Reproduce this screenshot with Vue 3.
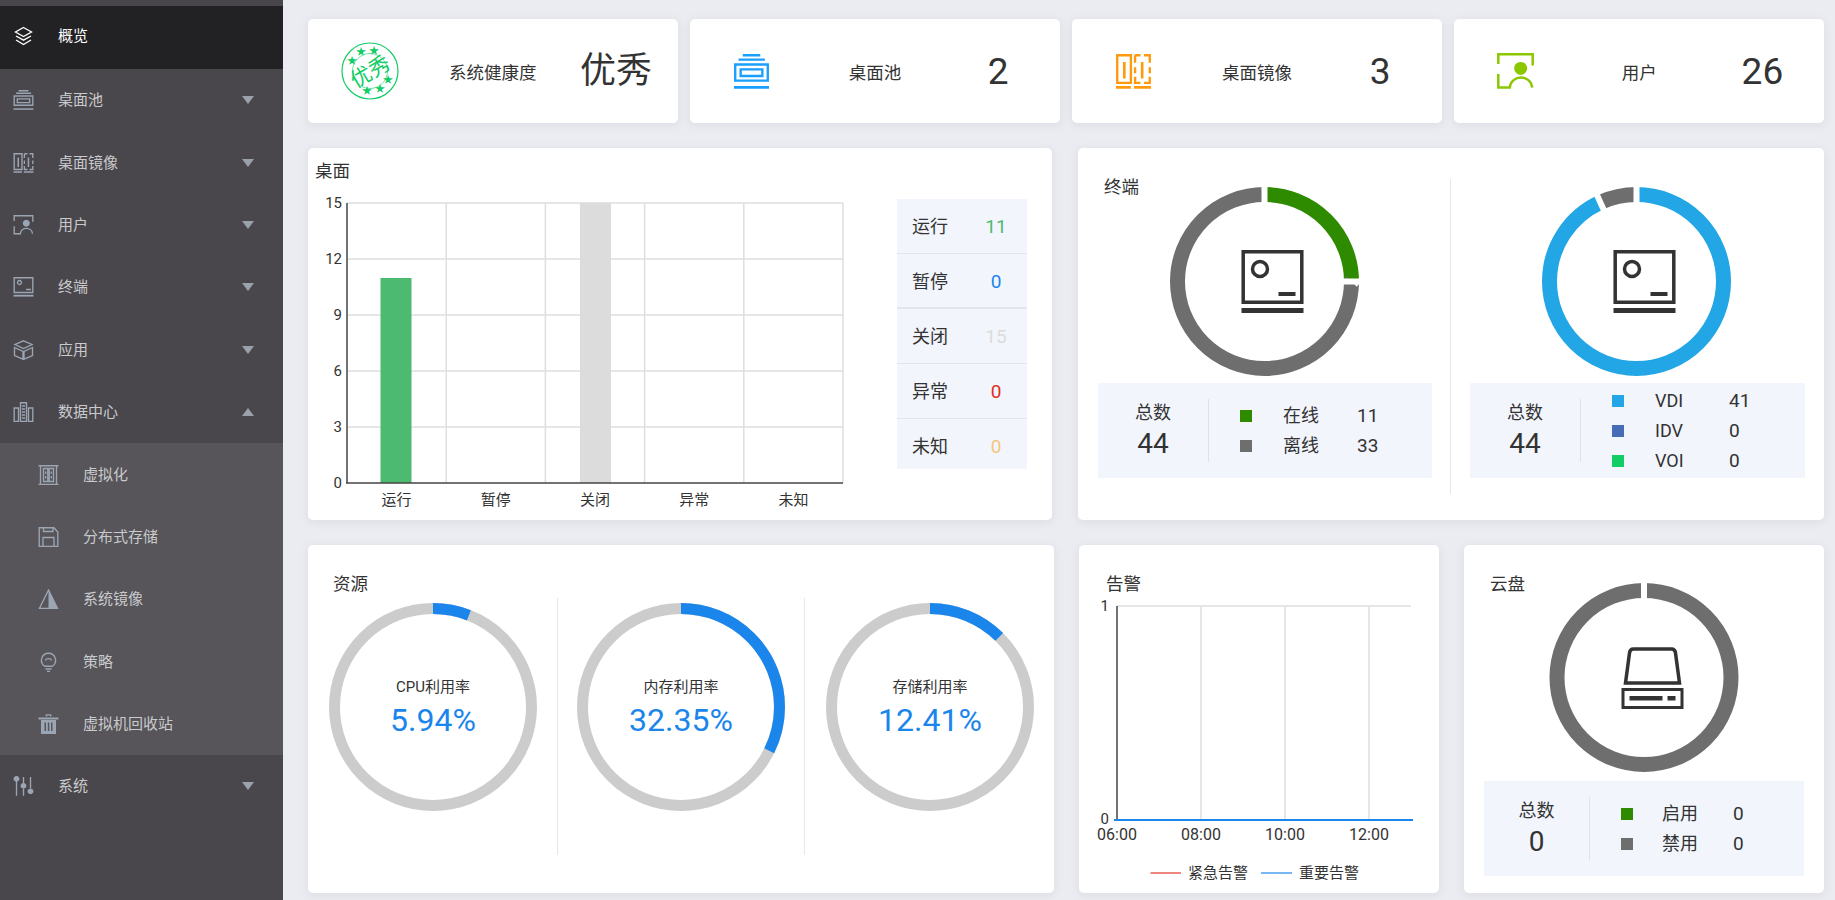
<script setup>
const icons = {
  layers: { s: 'M10 1.500 18 6 10 10.500 2 6ZM2.500 10 10 14.200 17.500 10M2.500 14 10 18.500 17.500 14' },
  pool: { s: 'M5 .7H15M2.600 3.200H17.600M.7 6H19.300V15.200H.7ZM3.800 8.800H16.200V12.600H3.800Z', f: 'M0 18.300H20V19.800H0Z' },
  image: { s: 'M.7 .7H8.500V16.500H.7ZM10.900 .7H14M16 .7H19.300V5M19.300 7.500V11M19.300 13V16.500H16M14 16.500H10.900V13M10.900 11V7.500M10.900 5V.7', f: 'M4 4.500H5.500V14H4ZM14.200 4.500H15.700V14H14.200ZM0 18.300H8.500V19.800H0ZM10.300 18.300H20V19.800H10.300Z' },
  user: { s: 'M.7 6V.7H19.300V6.800M.7 11.300V18.700H6.900C7.500 11.500 18.500 11.500 19 18.700', f: 'M12.800 4.800A3.500 3.500 0 1 1 12.790 4.800Z' },
  terminal: { s: 'M.7 .7H19.300V15.500H.7ZM6 3.500A2 2 0 1 1 5.990 3.500ZM12.500 12.500H17.500', f: 'M0 17.800H20V19.600H0Z' },
  app: { s: 'M10 .8 18.500 4.500 10 8.500 1.500 4.500ZM1 7.500 9.500 11.500V19.200L1 15.500ZM19 7.500 10.500 11.500V19.200L19 15.500Z' },
  dc: { s: 'M.7 6H5V19.300H.7ZM15 6H19.300V19.300H15ZM7 .7H13V19.300H7ZM8.500 4H11.500M8.500 7H11.500M8.500 10H11.500M8.500 13H11.500M8.500 16H11.500' },
  virt: { s: 'M0 .7H20M0 19.300H20M2 .7V19.300M18 .7V19.300M5 3.500H9.300V16.500H5ZM10.700 3.500H15V16.500H10.700ZM7.200 6.500V9M12.800 6.500V9M7.200 11V13.500M12.800 11V13.500' },
  disk: { s: 'M.7 .7H15.500L19.300 5V19.300H.7ZM4.500 19V10.500H15.500V19M5 1V4.500H14.500V1' },
  sysimg: { s: 'M10 1 19 19.300H1Z', f: 'M10 1 19.500 20H10Z' },
  bulb: { s: 'M10 1.300A7 7 0 0 1 13.800 14.200H6.200A7 7 0 0 1 10 1.300ZM7 17H13M8.500 19.400H11.500M6.800 8.500C8 6 12 6 13.200 8.500' },
  trash: { s: 'M7.800 2.500V.8H12.200V2.500', f: 'M0 3.500H20V5.500H0ZM2.500 6H17.500V20H2.500ZM6 8.500V17H7.500V8.500ZM9.300 8.500V17H10.800V8.500ZM12.500 8.500V17H14V8.500Z' },
  sliders: { s: 'M3 5V19.800M10 1V7M10 13V19.800M17 1V12', f: 'M3 0A2.900 2.900 0 1 1 2.990 0ZM10 7A2.900 2.900 0 1 1 9.990 7ZM17 12.500A2.900 2.900 0 1 1 16.990 12.500Z' }
}

const menu = [
  { t: '概览', i: 'layers', active: true },
  { t: '桌面池', i: 'pool', caret: 'down' },
  { t: '桌面镜像', i: 'image', caret: 'down' },
  { t: '用户', i: 'user', caret: 'down' },
  { t: '终端', i: 'terminal', caret: 'down' },
  { t: '应用', i: 'app', caret: 'down' },
  { t: '数据中心', i: 'dc', caret: 'up' }
]
const sub = [
  { t: '虚拟化', i: 'virt' },
  { t: '分布式存储', i: 'disk' },
  { t: '系统镜像', i: 'sysimg' },
  { t: '策略', i: 'bulb' },
  { t: '虚拟机回收站', i: 'trash' }
]
const metrics = [
  { t: '桌面池', v: '2', i: 'pool', c: 'pool' },
  { t: '桌面镜像', v: '3', i: 'image', c: 'image' },
  { t: '用户', v: '26', i: 'user', c: 'user' }
]
const stamps = [
  [-9, -20], [4, -21], [-18, -11], [18, 8], [10, 17], [-3, 19]
]

const yTicks = [15, 12, 9, 6, 3, 0]
const cats = ['运行', '暂停', '关闭', '异常', '未知']
const states = [
  { t: '运行', v: 11, c: '#4cba71' },
  { t: '暂停', v: 0, c: '#1a86ec' },
  { t: '关闭', v: 15, c: '#dcdcdc' },
  { t: '异常', v: 0, c: '#e02e24' },
  { t: '未知', v: 0, c: '#f5c67c' }
]

function segs(list) {
  const total = list.reduce((s, x) => s + x.v, 0)
  let at = 0
  return list.map((x) => {
    const a = { c: x.c, len: (x.v / total) * 360, start: at }
    at += a.len
    return a
  })
}

const terminals = [
  {
    title: '终端',
    segs: segs([{ v: 11, c: '#2e8b00' }, { v: 33, c: '#6e6e6e' }]),
    total: 44,
    rows: [
      { t: '在线', v: 11, c: '#2e8b00' },
      { t: '离线', v: 33, c: '#6e6e6e' }
    ]
  },
  {
    title: '',
    segs: segs([{ v: 41, c: '#22a6e6' }, { v: 3, c: '#6e6e6e' }]),
    total: 44,
    rows: [
      { t: 'VDI', v: 41, c: '#22a6e6' },
      { t: 'IDV', v: 0, c: '#466db5' },
      { t: 'VOI', v: 0, c: '#12cc66' }
    ]
  }
]
const gauges = [
  { t: 'CPU利用率', v: 5.94 },
  { t: '内存利用率', v: 32.35 },
  { t: '存储利用率', v: 12.41 }
]
const cloudRows = [
  { t: '启用', v: 0, c: '#2e8b00' },
  { t: '禁用', v: 0, c: '#6e6e6e' }
]
const alarmX = [
  { t: '06:00', x: 38 },
  { t: '08:00', x: 122 },
  { t: '10:00', x: 206 },
  { t: '12:00', x: 290 }
]
</script>

<template>
  <div class="page">
    <aside class="side">
      <div v-for="m in menu" :key="m.t" class="item" :class="{ active: m.active }">
        <svg class="ico" viewBox="0 0 20 20">
          <path :d="icons[m.i].s" class="st" />
          <path v-if="icons[m.i].f" :d="icons[m.i].f" class="fl" />
        </svg>
        <span class="name">{{ m.t }}</span>
        <i v-if="m.caret" class="caret" :class="m.caret"></i>
      </div>
      <div class="submenu">
        <div v-for="m in sub" :key="m.t" class="item subitem">
          <svg class="ico" viewBox="0 0 20 20">
            <path :d="icons[m.i].s" class="st" />
            <path v-if="icons[m.i].f" :d="icons[m.i].f" class="fl" />
          </svg>
          <span class="name">{{ m.t }}</span>
        </div>
      </div>
      <div class="item">
        <svg class="ico" viewBox="0 0 20 20">
          <path :d="icons.sliders.s" class="st" />
          <path :d="icons.sliders.f" class="fl" />
        </svg>
        <span class="name">系统</span>
        <i class="caret down"></i>
      </div>
    </aside>

    <main class="main">
      <section class="row metrics">
        <div class="card metric">
          <svg class="stamp" viewBox="0 0 58 58">
            <circle cx="29" cy="29" r="28" class="ring" />
            <circle cx="29" cy="29" r="17.500" class="ring thin" />
            <text x="29" y="37" class="stamp-t" transform="rotate(-30 29 29)">优秀</text>
            <text v-for="(p, k) in stamps" :key="k" :x="29 + p[0]" :y="29 + p[1] + 3.500" class="star">★</text>
          </svg>
          <span class="m-label">系统健康度</span>
          <span class="m-value cjk">优秀</span>
        </div>
        <div v-for="m in metrics" :key="m.t" class="card metric">
          <svg class="m-ico" :class="m.c" viewBox="0 0 20 20">
            <path :d="icons[m.i].s" class="st" />
            <path v-if="icons[m.i].f" :d="icons[m.i].f" class="fl" />
          </svg>
          <span class="m-label">{{ m.t }}</span>
          <span class="m-value">{{ m.v }}</span>
        </div>
      </section>

      <section class="row second">
        <div class="card desktop">
          <div class="d-left">
            <h3 class="d-title">桌面</h3>
            <svg class="bar" width="560" height="325" viewBox="0 0 560 325">
              <g v-for="(y, k) in yTicks" :key="y">
                <line v-if="y" x1="39" x2="535" :y1="13 + k * 56" :y2="13 + k * 56" class="grid" />
                <text x="34" :y="18 + k * 56" class="axis end">{{ y }}</text>
              </g>
              <line v-for="k in 5" :key="k" :x1="39 + k * 99.2" :x2="39 + k * 99.2" y1="13" y2="293" class="grid" />
              <rect x="72.500" y="88" width="31" height="205" fill="#4cba71" />
              <rect x="272" y="13" width="31" height="280" fill="#dcdcdc" />
              <line x1="39" x2="39" y1="13" y2="293" class="ax" />
              <line x1="38" x2="535" y1="293" y2="293" class="ax" />
              <text v-for="(c, k) in cats" :key="c" :x="88.600 + k * 99.2" y="315" class="axis mid">{{ c }}</text>
            </svg>
          </div>
          <ul class="states">
            <li v-for="s in states" :key="s.t" class="state">
              <span>{{ s.t }}</span>
              <b :style="{ color: s.c }">{{ s.v }}</b>
            </li>
          </ul>
        </div>

        <div class="card term">
          <div v-for="(p, k) in terminals" :key="k" class="t-col">
            <h3 class="t-title">{{ p.title }}</h3>
            <svg class="donut" width="333" height="189" viewBox="0 0 333 189">
              <circle
                v-for="(g, n) in p.segs"
                :key="n"
                cx="166.500"
                cy="94.500"
                r="87"
                pathLength="360"
                fill="none"
                stroke-width="15"
                :stroke="g.c"
                :stroke-dasharray="`${g.len} 360`"
                :stroke-dashoffset="-g.start"
                transform="rotate(-90 166.500 94.500)"
              />
              <line
                v-for="(g, n) in p.segs"
                :key="'l' + n"
                x1="166.500"
                x2="166.500"
                y1="-2"
                y2="18"
                class="gap"
                :transform="`rotate(${g.start} 166.500 94.500)`"
              />
              <g transform="translate(143.500 63)">
                <path d="M1.700 1.700H60.300V52.300H1.700Z" class="big" />
                <circle cx="18.500" cy="19" r="7.500" class="big" />
                <path d="M37 42H54V46H37ZM0 58H62V63H0Z" fill="#333" />
              </g>
            </svg>
            <div class="sum">
              <div class="total"><span>总数</span><b>{{ p.total }}</b></div>
              <div class="legend">
                <template v-for="r in p.rows" :key="r.t">
                  <i class="sq" :style="{ background: r.c }"></i>
                  <span>{{ r.t }}</span>
                  <span class="val">{{ r.v }}</span>
                </template>
              </div>
            </div>
          </div>
        </div>
      </section>

      <section class="row third">
        <div class="card res">
          <h3 class="r-title">资源</h3>
          <div class="gauges">
            <div v-for="g in gauges" :key="g.t" class="gauge">
              <svg width="208" height="208" viewBox="0 0 208 208">
                <circle cx="104" cy="104" r="98.500" fill="none" stroke="#cccccc" stroke-width="11" />
                <circle
                  cx="104"
                  cy="104"
                  r="98.500"
                  fill="none"
                  stroke="#1a86ec"
                  stroke-width="11"
                  pathLength="100"
                  :stroke-dasharray="`${g.v} 100`"
                  transform="rotate(-90 104 104)"
                />
                <text x="104" y="89" class="g-label">{{ g.t }}</text>
                <text x="104" y="128" class="g-value">{{ g.v }}%</text>
              </svg>
            </div>
          </div>
        </div>

        <div class="card alarm">
          <h3 class="a-title">告警</h3>
          <svg class="a-chart" width="360" height="295" viewBox="0 0 360 295">
            <line x1="38" x2="332" y1="8" y2="8" class="grid" />
            <line v-for="x in [122, 206, 290]" :key="x" :x1="x" :x2="x" y1="8" y2="222" class="grid" />
            <line x1="38" x2="38" y1="8" y2="222" class="ax" />
            <line x1="35" x2="334" y1="222" y2="222" stroke="#1a86ec" stroke-width="2" />
            <text x="30" y="13" class="axis end">1</text>
            <text x="30" y="226" class="axis end">0</text>
            <text v-for="a in alarmX" :key="a.t" :x="a.x" y="242" class="axis mid time">{{ a.t }}</text>
            <line x1="71.500" x2="102" y1="275" y2="275" stroke="#e5352d" stroke-width="1.200" />
            <text x="109" y="280" class="axis">紧急告警</text>
            <line x1="182" x2="213" y1="275" y2="275" stroke="#1a86ec" stroke-width="1.200" />
            <text x="220" y="280" class="axis">重要告警</text>
          </svg>
        </div>

        <div class="card cloud">
          <h3 class="c-title">云盘</h3>
          <svg class="donut" width="320" height="189" viewBox="0 0 320 189">
            <circle cx="160" cy="94.500" r="87" fill="none" stroke="#6e6e6e" stroke-width="15" />
            <line x1="160" x2="160" y1="-2" y2="18" class="gap" />
            <g transform="translate(137.500 64)">
              <path d="M4 36 8 6Q8.500 2 12 2H50Q53.500 2 54 6L58 36Z" class="big" />
              <path d="M0 41H62V62H0ZM3 44V59H59V44ZM8 49H41V53.500H8ZM46 49H54V53.500H46Z" fill="#333" fill-rule="evenodd" />
            </g>
          </svg>
          <div class="sum small">
            <div class="total"><span>总数</span><b>0</b></div>
            <div class="legend">
              <template v-for="r in cloudRows" :key="r.t">
                <i class="sq" :style="{ background: r.c }"></i>
                <span>{{ r.t }}</span>
                <span class="val">{{ r.v }}</span>
              </template>
            </div>
          </div>
        </div>
      </section>
    </main>
  </div>
</template>

<style>
html,
body {
  margin: 0;
  background: #ebecf1;
}
</style>

<style scoped>
.page {
  display: flex;
  width: 1835px;
  height: 900px;
  overflow: hidden;
  font-family: Roboto, "Noto Sans CJK SC", sans-serif;
  color: #333;
  background: #ebecf1;
}
.side {
  flex: none;
  width: 283px;
  height: 900px;
  padding-top: 6px;
  box-sizing: border-box;
  background: #49474b;
  color: #c9cacd;
  font-size: 15px;
}
.item {
  display: flex;
  align-items: center;
  height: 62.400px;
  box-sizing: border-box;
  padding-left: 13px;
  position: relative;
}
.item.active {
  height: 63px;
  padding-bottom: 3px;
  background: #222224;
  color: #fff;
}
.ico {
  flex: none;
  width: 21px;
  height: 20px;
  color: #9ba5b3;
}
.active .ico {
  color: #fff;
}
.st {
  fill: none;
  stroke: currentColor;
  stroke-width: 1.350;
}
.fl {
  fill: currentColor;
  fill-rule: evenodd;
}
.name {
  margin-left: 24px;
  padding-bottom: 3px;
}
.caret {
  position: absolute;
  left: 242px;
  width: 0;
  height: 0;
  border-left: 6.500px solid transparent;
  border-right: 6.500px solid transparent;
}
.caret.down {
  border-top: 8px solid #9aa1ab;
}
.caret.up {
  border-bottom: 8px solid #9aa1ab;
}
.submenu {
  background: #575559;
}
.subitem {
  padding-left: 38px;
}
.main {
  flex: 1;
  padding: 19px 11px 0 25px;
  min-width: 0;
}
.row {
  display: grid;
  margin-bottom: 25px;
}
.card {
  background: #fff;
  border-radius: 5px;
  box-shadow: 0 2px 10px rgba(120, 125, 150, 0.14);
  box-sizing: border-box;
}
.metrics {
  grid-template-columns: repeat(4, 1fr);
  gap: 12.500px;
  height: 104px;
}
.metric {
  display: grid;
  grid-template-columns: repeat(3, 1fr);
  align-items: center;
  justify-items: center;
}
.m-label {
  font-size: 17.500px;
}
.m-value {
  font-size: 37px;
  line-height: 1;
}
.m-value.cjk {
  font-size: 36px;
  font-weight: 400;
  color: #333;
}
.m-ico {
  width: 35px;
  height: 35px;
}
.m-ico.pool {
  color: #1a9fff;
}
.m-ico.image {
  color: #ff9a0e;
}
.m-ico.user {
  color: #8cc800;
  width: 37px;
  height: 37px;
}
.stamp {
  width: 58px;
  height: 58px;
}
.ring {
  fill: none;
  stroke: #12cc66;
  stroke-width: 1.200;
}
.ring.thin {
  stroke-width: 0.600;
}
.stamp-t {
  fill: #12cc66;
  font-size: 21px;
  text-anchor: middle;
  font-weight: 400;
}
.star {
  fill: #12cc66;
  font-size: 10px;
  text-anchor: middle;
}
.second {
  grid-template-columns: 744px 746px;
  gap: 26px;
  height: 372px;
}
.desktop {
  display: flex;
}
.d-left {
  flex: none;
  width: 589px;
}
.d-title,
.t-title,
.r-title,
.a-title,
.c-title {
  margin: 0;
  font-size: 17.500px;
  font-weight: 400;
  line-height: 24px;
}
.d-title {
  padding: 11px 0 0 7px;
  height: 31px;
}
.bar {
  display: block;
}
.grid {
  stroke: #dedede;
  stroke-width: 1.500;
}
.ax {
  stroke: #444;
  stroke-width: 1.500;
}
.axis {
  font-size: 15px;
  fill: #333;
}
.axis.end {
  text-anchor: end;
}
.axis.mid {
  text-anchor: middle;
}
.axis.time {
  font-size: 16px;
}
.states {
  list-style: none;
  margin: 51px 0 0;
  padding: 0;
  width: 130px;
  height: 270px;
  overflow: hidden;
  background: #f2f5fc;
}
.state {
  display: flex;
  height: 55px;
  box-sizing: border-box;
  padding-left: 15px;
  line-height: 55px;
  font-size: 18px;
  border-bottom: 1px solid #e3e5ea;
}
.state:nth-child(2) {
  border-bottom-width: 2px;
}
.state span {
  width: 71px;
}
.state b {
  width: 26px;
  text-align: center;
  font-weight: 400;
  font-size: 19px;
}
.term {
  display: flex;
  padding-top: 31px;
  height: 372px;
}
.t-col {
  width: 373px;
  height: 315px;
  box-sizing: border-box;
  padding: 8px 20px 0;
}
.t-col:first-child {
  border-right: 1px solid #e6e7ea;
  padding-right: 18px;
}
.t-col:last-child {
  padding: 8px 19px 0;
}
.t-title {
  height: 0;
  margin-left: 6px;
  position: relative;
  top: -12px;
}
.donut {
  display: block;
}
.gap {
  stroke: #fff;
  stroke-width: 6;
}
.big {
  fill: none;
  stroke: #333;
  stroke-width: 3.500;
}
.sum {
  display: flex;
  align-items: center;
  height: 95px;
  margin-top: 7px;
  background: #f2f5fc;
}
.total {
  flex: none;
  display: flex;
  flex-direction: column;
  align-items: center;
  width: 111px;
  height: 63px;
  box-sizing: border-box;
  border-right: 1px solid #dfe1e6;
  font-size: 18px;
  line-height: 30px;
}
.total span {
  margin-top: -1px;
}
.total b {
  font-size: 28px;
  font-weight: 400;
  line-height: 30px;
  margin-top: 1px;
}
.legend {
  display: grid;
  grid-template-columns: 43px 74px auto;
  grid-auto-rows: 30px;
  align-items: center;
  padding-left: 31px;
  font-size: 18px;
  line-height: 1;
}
.val {
  font-size: 19px;
}
.sq {
  display: block;
  width: 12px;
  height: 12px;
}
.third {
  grid-template-columns: 746px 360px 360px;
  gap: 25px;
  height: 348px;
  margin-bottom: 0;
}
.r-title {
  padding: 27px 0 0 25px;
  height: 26px;
}
.gauges {
  display: flex;
}
.gauge {
  flex: none;
  width: 249px;
  height: 257px;
  box-sizing: border-box;
  padding-top: 5px;
  text-align: center;
}
.gauge:nth-child(2) {
  width: 248px;
  border-left: 1px solid #e6e7ea;
  border-right: 1px solid #e6e7ea;
}
.g-label {
  font-size: 15px;
  text-anchor: middle;
  fill: #333;
}
.g-value {
  font-size: 32px;
  text-anchor: middle;
  fill: #1a86ec;
}
.a-title {
  padding: 27px 0 0 27px;
  height: 26px;
}
.a-chart {
  display: block;
}
.c-title {
  height: 0;
  padding: 27px 0 0 26px;
}
.cloud .donut {
  margin-top: 10.500px;
  margin-left: 20px;
}
.sum.small {
  margin: 9.500px 20px 0;
}
.small .total {
  width: 106px;
}
.small .legend {
  grid-template-columns: 41px 71px auto;
}
</style>
